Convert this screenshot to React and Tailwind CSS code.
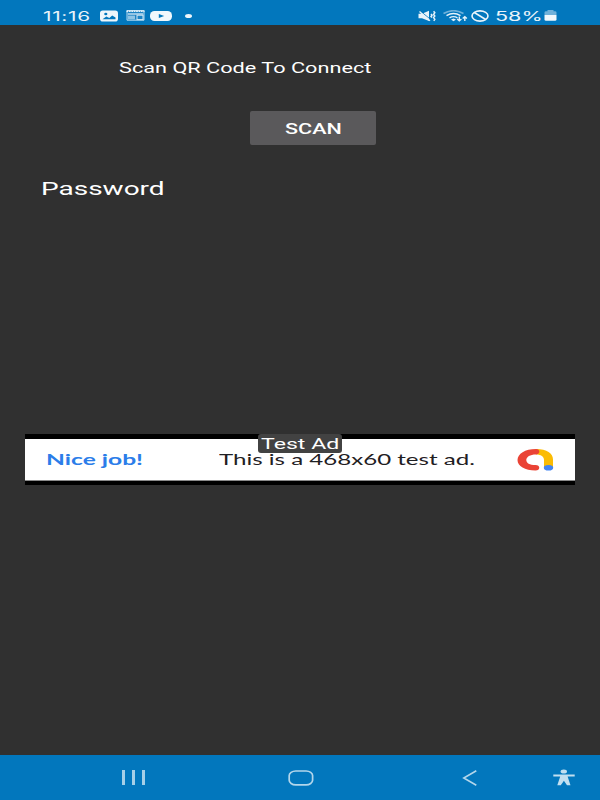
const StatusBar = () => {
  return (
    <div className="h-[25px] bg-[#0277bd] flex items-center pl-[43px] pt-[6px] text-[#eaf4fa]">
      <div className="w-[57px] text-[13px] leading-5 font-['Inter']">
        <span className="inline-block origin-left scale-x-[1.6] tracking-[0.45px]">11:16</span>
      </div>

      {/* Notifications */}
      <svg className="w-[18px] h-[12px]" viewBox="0 0 18 12">
        <rect y="0.5" width="18" height="11" rx="2.8" fill="#eef6fb" />
        <ellipse cx="5.8" cy="4" rx="1.6" ry="1.3" fill="#0277bd" />
        <path d="M2.5 9.3 L6.3 6.6 L9.3 8 L12.2 5.4 L15.5 7.6 V9.3 Z" fill="#0277bd" />
      </svg>
      <svg className="w-[19px] h-[11px] ml-[8px]" viewBox="0 0 19 11">
        <path d="M1 0.5 H18 V10.2 H1 Z" fill="#1c83c4" stroke="#b9dbef" strokeWidth="1" />
        <path d="M0.5 1.3 H18.5" stroke="#e5f2fa" strokeWidth="1.6" strokeDasharray="1.8 0.6" />
        <path d="M2 4 H17" stroke="#e5f2fa" strokeWidth="1.2" />
        <rect x="2" y="5.6" width="7" height="3.8" fill="#8fc4e4" />
        <rect x="11" y="5.2" width="6" height="4.4" fill="#1c83c4" stroke="#d5eaf6" strokeWidth="1" />
      </svg>
      <svg className="w-[22px] h-[10px] ml-[5px]" viewBox="0 0 22 10">
        <rect width="22" height="10" rx="4.5" fill="#f1f8fc" />
        <path d="M8.8 2.9 L14.2 5 L8.8 7.1 Z" fill="#0277bd" />
      </svg>
      <div className="w-[7px] h-[4px] rounded-[50%] bg-[#eef6fb] ml-[13px]" />

      {/* System icons */}
      <svg className="w-[18px] h-[12px] ml-[226px]" viewBox="0 0 18 12">
        <path d="M0.5 3.8 H4 L11 0.8 V11 L4 8.2 H0.5 Z" fill="#eaf4fa" />
        <path d="M3 1.6 L12.5 9.4" stroke="#0277bd" strokeWidth="0.9" />
        <path d="M1.5 1.4 L12 10.8" stroke="#eaf4fa" strokeWidth="1.3" />
        <path
          d="M13 4 L14 5.2 L13 6.4 L14 7.6 M15.6 1.2 L16.8 2.8 L15.6 4.4 L16.8 6 L15.6 7.6 L16.8 9.2 L15.8 10.8"
          fill="none"
          stroke="#e5f2fa"
          strokeWidth="1.5"
        />
      </svg>
      <svg className="w-[25px] h-[12px] ml-[7px]" viewBox="0 0 25 12">
        <path d="M0.5 3.5 Q10.5 -2.2 20.5 3.5" fill="none" stroke="#6fb1da" strokeWidth="1.5" />
        <path d="M3.5 5.7 Q10.5 1.4 17.5 5.7" fill="none" stroke="#e5f2fa" strokeWidth="1.5" />
        <path d="M6.5 7.9 Q10.5 5.3 14.5 7.9" fill="none" stroke="#e5f2fa" strokeWidth="1.4" />
        <path d="M8 9.4 L10.5 8.4 L13 9.4 L10.5 11.2 Z" fill="#e5f2fa" />
        <path
          d="M16.3 6.5 V10.7 M14.2 9 L16.3 10.9 L18.4 9 M21.8 11 V6.8 M19.7 8.5 L21.8 6.7 L23.9 8.5"
          fill="none"
          stroke="#e5f2fa"
          strokeWidth="1.4"
        />
      </svg>
      <svg className="w-[18px] h-[12px] ml-[3px]" viewBox="0 0 18 12">
        <ellipse cx="9" cy="6" rx="8" ry="5.1" fill="none" stroke="#eaf4fa" strokeWidth="1.6" />
        <path d="M3.3 2.5 L14.7 9.5" stroke="#eaf4fa" strokeWidth="1.6" />
      </svg>
      <div className="w-[48px] text-[13px] leading-5 ml-[6px] font-['Inter']">
        <span className="inline-block origin-left scale-x-[1.66]">58%</span>
      </div>
      <svg className="w-[13px] h-[11px] ml-[1px]" viewBox="0 0 13 11">
        <path d="M3.5 0 H9.5 V1.2 H11 Q12.5 1.2 12.5 2.6 V5 H0.5 V2.6 Q0.5 1.2 2 1.2 H3.5 Z" fill="#6fb1da" />
        <path d="M0.5 5 H12.5 V9.4 Q12.5 10.8 11 10.8 H2 Q0.5 10.8 0.5 9.4 Z" fill="#f1f8fc" />
      </svg>
    </div>
  );
};

const AdBanner = () => {
  return (
    <div className="relative mx-[25px] mt-[233px] h-[51px] bg-black py-[5px]">
      <div className="h-[42px] bg-white border-b border-[#8a8a8a] flex items-center pl-[21px] pr-[21px] pb-[2px] font-['Lato'] text-[15px] leading-5">
        <div className="w-[173px] text-[#2b7de9] font-bold">
          <span className="inline-block origin-left scale-x-[1.64] whitespace-nowrap">Nice job!</span>
        </div>
        <div className="w-[298px] text-[#1f2023]">
          <span className="inline-block origin-left scale-x-[1.605] whitespace-nowrap">
            This is a 468x60 test ad.
          </span>
        </div>
        <svg className="w-[37px] h-[22px] shrink-0 mt-[2px]" viewBox="0 0 37 22">
          <path
            d="M19 0 C30 0 36 4.5 36 10.5 V18.7 H27 V11 C27 7.5 24 5.4 19 5.4 Z"
            fill="#fbbc04"
          />
          <path
            d="M19 0 C8 0 0.5 4.8 0.5 11 C0.5 17.2 8 21.5 18.5 21.5 C23.5 21.5 23.5 16 18.5 16 C12.5 16 9.3 14 9.3 11 C9.3 7.8 13 5.4 19 5.4 C23.5 5.4 23.5 0 19 0 Z"
            fill="#ea4335"
          />
          <ellipse cx="31.5" cy="18.7" rx="4.7" ry="2.8" fill="#4285f4" />
        </svg>
      </div>

      {/* Label over the banner */}
      <div className="absolute left-[233px] top-0 w-[84px] h-[19px] rounded-[3px] bg-[#424242] pl-[3px] text-white text-[15px] leading-[20px]">
        <span className="inline-block origin-left scale-x-[1.54] whitespace-nowrap">Test Ad</span>
      </div>
    </div>
  );
};

const NavBar = () => {
  return (
    <div className="h-[45px] bg-[#0277bd] flex items-center mt-auto pl-[122px]">
      <div className="flex gap-[7px] w-[166px]">
        <div className="w-[3px] h-[15px] bg-[#a5cfe8]" />
        <div className="w-[3px] h-[15px] bg-[#a5cfe8]" />
        <div className="w-[3px] h-[15px] bg-[#a5cfe8]" />
      </div>
      <svg className="w-[26px] h-[16px]" viewBox="0 0 26 16">
        <rect x="1.2" y="1" width="23.4" height="13.8" rx="6.5" ry="4.6" fill="none" stroke="#b3d6eb" strokeWidth="1.7" />
      </svg>
      <svg className="w-[16px] h-[16px] ml-[148px]" viewBox="0 0 16 16">
        <path d="M14.3 0.8 L1.8 8 L14.3 15.2" fill="none" stroke="#b3d6eb" strokeWidth="1.6" />
      </svg>
      <svg className="w-[22px] h-[17px] ml-[75px]" viewBox="0 0 22 17">
        <ellipse cx="10.8" cy="2.4" rx="3.2" ry="2" fill="#c2dff0" />
        <path
          d="M0.3 5.4 H21.7 V7.4 H14.6 L17.5 16.2 H14 L10.9 11.8 L7.8 16.2 H4.3 L7.2 7.4 H0.3 Z"
          fill="#c2dff0"
        />
      </svg>
    </div>
  );
};

const App = () => {
  return (
    <div className="w-[600px] h-[800px] bg-[#303030] flex flex-col overflow-hidden font-['Roboto',sans-serif] text-white">
      <StatusBar />

      <div className="mt-[33px] pl-[119px] text-[14px] leading-5">
        <span className="inline-block origin-left scale-x-[1.55] whitespace-nowrap">
          Scan QR Code To Connect
        </span>
      </div>

      <button className="ml-[250px] mt-[33px] w-[126px] h-[34px] rounded-[2px] bg-[#5a595b] text-[14px] font-medium flex items-center justify-center pt-[2px]">
        <span className="inline-block scale-x-[1.54]">SCAN</span>
      </button>

      <div className="mt-[32px] pl-[41px] text-[18px] leading-6">
        <span className="inline-block origin-left scale-x-[1.555]">Password</span>
      </div>

      <AdBanner />
      <NavBar />
    </div>
  );
};

export default App;
